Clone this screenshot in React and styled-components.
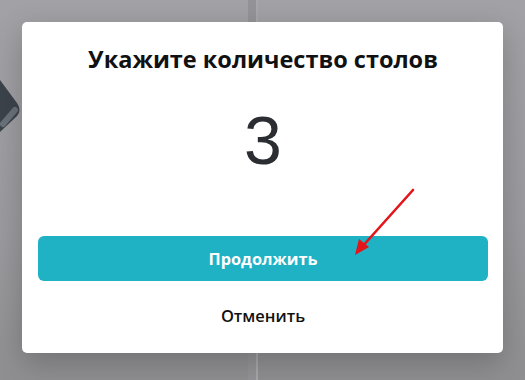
import React from "react";
import styled, { createGlobalStyle } from "styled-components";

const Global = createGlobalStyle`
  html, body {
    margin: 0;
    padding: 0;
  }
  body {
    font-family: "Open Sans", "Liberation Sans", Arial, sans-serif;
    background: #9d9da1;
  }
`;

const Page = styled.div`
  position: relative;
  width: 525px;
  height: 380px;
  overflow: hidden;
  background: linear-gradient(180deg, #a2a2a6 0%, #9b9b9f 60%, #8f8f92 100%);
  display: flex;
  justify-content: center;
  align-items: flex-start;
  padding-top: 22px;
  box-sizing: border-box;
`;

const Divider = styled.div`
  position: absolute;
  top: 0;
  bottom: 0;
  left: 248px;
  width: 8px;
  background: #949498;
  border-right: 2px solid #a8a8ac;
`;

const Handle = styled.svg`
  position: absolute;
  left: 0;
  top: 70px;
`;

const Modal = styled.div`
  position: relative;
  width: 481px;
  height: 331px;
  box-sizing: border-box;
  background: #fff;
  border-radius: 5px;
  box-shadow: 0 10px 30px rgba(0, 0, 0, 0.22);
  padding: 0 15px 0 16px;
  display: flex;
  flex-direction: column;
  align-items: center;
`;

const Title = styled.h2`
  margin: 22px 0 0;
  font-family: "Open Sans", "Liberation Sans", Arial, sans-serif;
  font-size: 23.5px;
  font-weight: 700;
  color: #111;
  line-height: 30px;
`;

const Count = styled.div`
  margin-top: 32px;
  font-family: "Liberation Sans", Arial, sans-serif;
  font-size: 68px;
  line-height: 68px;
  color: #2a2e33;
`;

const Primary = styled.button`
  margin-top: 62px;
  width: 100%;
  height: 45px;
  border: none;
  border-radius: 6px;
  background: #1fb1c4;
  color: #fff;
  font-family: "Open Sans", "Liberation Sans", Arial, sans-serif;
  font-size: 16.3px;
  font-weight: 700;
  cursor: pointer;
`;

const Cancel = styled.button`
  margin-top: 22px;
  border: none;
  background: none;
  color: #111;
  font-family: "Open Sans", "Liberation Sans", Arial, sans-serif;
  font-size: 16.5px;
  font-weight: 600;
  cursor: pointer;
`;

const Arrow = styled.svg`
  position: absolute;
  left: 330px;
  top: 162px;
  pointer-events: none;
`;

export default function App() {
  return (
    <Page>
      <Global />
      <Divider />
      <Handle width="30" height="70" viewBox="0 0 30 70">
        <path d="M0 10 L17 33 Q22 40 17 46 L0 62 Z" fill="#3d434b" />
        <line x1="15" y1="40" x2="3" y2="54" stroke="#6b7179" strokeWidth="6" strokeLinecap="round" />
      </Handle>
      <Modal>
        <Title>Укажите количество столов</Title>
        <Count>3</Count>
        <Primary>Продолжить</Primary>
        <Cancel>Отменить</Cancel>
        <Arrow width="100" height="100" viewBox="0 0 100 100">
          <line x1="61" y1="6" x2="9" y2="64" stroke="#e3141a" strokeWidth="2.6" strokeLinecap="round" />
          <polygon points="3,71 7,55 17,63" fill="#e3141a" />
        </Arrow>
      </Modal>
    </Page>
  );
}
